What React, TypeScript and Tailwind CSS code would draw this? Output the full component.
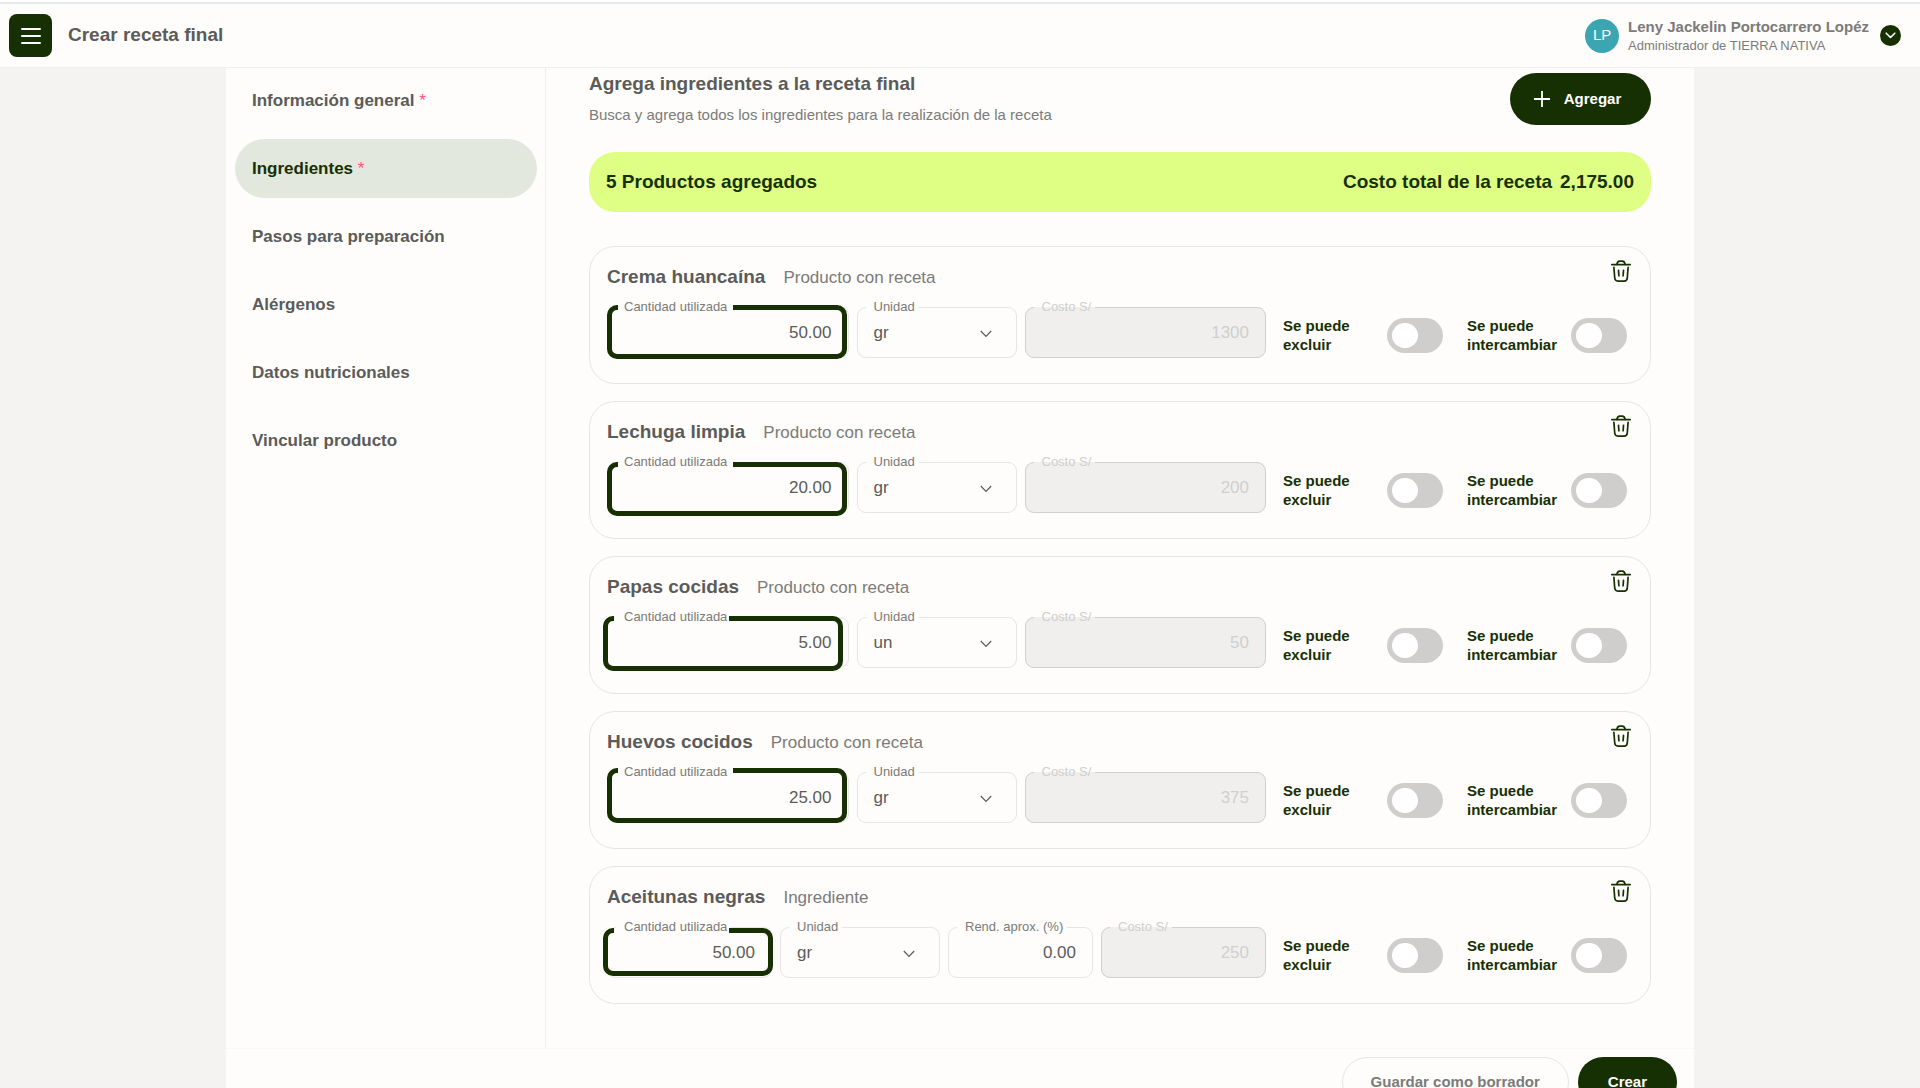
import React, { useState } from "react";

const SIDEBAR_ITEMS = [
  { label: "Información general", required: true },
  { label: "Ingredientes", required: true },
  { label: "Pasos para preparación", required: false },
  { label: "Alérgenos", required: false },
  { label: "Datos nutricionales", required: false },
  { label: "Vincular producto", required: false },
];

type Ingredient = {
  id: string;
  name: string;
  kind: string;
  quantity: string;
  unit: string;
  performance?: string;
  cost: string;
  outline: string;
};

const INGREDIENTS: Ingredient[] = [
  {
    id: "crema",
    name: "Crema huancaína",
    kind: "Producto con receta",
    quantity: "50.00",
    unit: "gr",
    cost: "1300",
    outline: "left-0 right-[2px] top-[5px] -bottom-px",
  },
  {
    id: "lechuga",
    name: "Lechuga limpia",
    kind: "Producto con receta",
    quantity: "20.00",
    unit: "gr",
    cost: "200",
    outline: "left-0 right-[2px] top-[7px] -bottom-[3px]",
  },
  {
    id: "papas",
    name: "Papas cocidas",
    kind: "Producto con receta",
    quantity: "5.00",
    unit: "un",
    cost: "50",
    outline: "-left-1 right-[6px] top-[6px] -bottom-[3px]",
  },
  {
    id: "huevos",
    name: "Huevos cocidos",
    kind: "Producto con receta",
    quantity: "25.00",
    unit: "gr",
    cost: "375",
    outline: "left-0 right-[2px] top-[3px] bottom-0",
  },
  {
    id: "aceitunas",
    name: "Aceitunas negras",
    kind: "Ingrediente",
    quantity: "50.00",
    unit: "gr",
    performance: "0.00",
    cost: "250",
    outline: "-left-1 -right-px top-[8px] bottom-[2px]",
  },
];

function TrashIcon() {
  return (
    <svg
      className="h-6 w-6"
      viewBox="0 0 24 24"
      fill="none"
      stroke="currentColor"
      strokeWidth="1.7"
      strokeLinecap="round"
      strokeLinejoin="round"
    >
      <path d="M2.8 5.6h18.4" />
      <path d="M7.9 5.4c.3-2.2 1.1-3.3 2.9-3.3h2.4c1.8 0 2.6 1.1 2.9 3.3" />
      <path d="M4.9 8.4l.8 10.4c.2 2.2 1 3.3 3.2 3.3h6.2c2.2 0 3-1.1 3.2-3.3l.8-10.4" />
      <path d="M9.500 11.400l.4 5.400" />
      <path d="M14.500 11.400l-.4 5.400" />
    </svg>
  );
}

type FieldProps = {
  id: string;
  label: string;
  className: string;
  disabled?: boolean;
  outline?: string;
  children: React.ReactNode;
};

function Field({ id, label, className, disabled, outline, children }: FieldProps) {
  return (
    <div className={`relative ${className}`}>
      <fieldset
        className={`min-w-0 rounded-[9px] border ${
          disabled
            ? "border-[#d0d0ce] bg-[#f0efee] text-[#cfcfcd]"
            : "border-[#e6e5e3] text-[#5b5b59]"
        }`}
      >
        <legend className="relative z-10 ml-2 pl-2 pr-1 text-[13px] leading-[14px]">
          <label htmlFor={id} className={disabled ? "" : "text-[#7b7b79]"}>
            {label}
          </label>
        </legend>
        {children}
      </fieldset>
      {outline && (
        <div
          className={`pointer-events-none absolute rounded-[10px] border-[5px] border-[#173003] ${outline}`}
        >
          {/* notch for the label */}
          <span className="absolute -top-[5px] left-[6px] h-[5px] w-[115px] bg-[#fefdfb]" />
        </div>
      )}
    </div>
  );
}

const inputStyles =
  "block h-[43px] w-full bg-transparent px-4 pb-[5px] text-right text-[17px] outline-none";

function Toggle({ id, label }: { id: string; label: string }) {
  return (
    <div className="flex w-[160px] shrink-0 items-center justify-between">
      <label htmlFor={id} className="w-min text-[15px] font-bold leading-[19px] text-[#173003]">
        <span className="whitespace-nowrap">Se puede</span> {label}
      </label>
      <input
        id={id}
        type="checkbox"
        role="switch"
        className="h-[35px] w-[56px] shrink-0 cursor-pointer appearance-none rounded-full bg-[#cfcecd] before:ml-[5px] before:mt-[5px] before:block before:h-[25px] before:w-[26px] before:rounded-full before:bg-white checked:bg-[#173003] checked:before:ml-[25px]"
      />
    </div>
  );
}

function IngredientCard({ item }: { item: Ingredient }) {
  const hasPerformance = item.performance !== undefined;

  return (
    <article className="h-[138px] rounded-[26px] border border-[#e6e5e3] pl-[17px] pr-[23px]">
      <div className="flex items-start justify-between">
        <div className="flex items-baseline gap-[18px] pt-[18px] leading-6">
          <h3 className="text-[19px] font-bold text-[#5b5b59]">{item.name}</h3>
          <p className="text-[17px] text-[#7b7b79]">{item.kind}</p>
        </div>
        <button
          type="button"
          aria-label={`Eliminar ${item.name}`}
          className="-mr-[6px] mt-3 text-[#173003]"
        >
          <TrashIcon />
        </button>
      </div>

      <div className="mt-[10px] flex">
        <div className="flex min-w-0 flex-1 gap-2">
          <Field
            id={`${item.id}-cantidad`}
            label="Cantidad utilizada"
            className={hasPerformance ? "w-[165px]" : "min-w-0 flex-1"}
            outline={item.outline}
          >
            <input
              id={`${item.id}-cantidad`}
              defaultValue={item.quantity}
              className={inputStyles}
            />
          </Field>

          <Field id={`${item.id}-unidad`} label="Unidad" className="w-[160px]">
            <div className="relative">
              <select
                id={`${item.id}-unidad`}
                defaultValue={item.unit}
                className="block h-[43px] w-full appearance-none bg-transparent px-4 pb-[5px] text-[17px] outline-none"
              >
                <option value={item.unit}>{item.unit}</option>
              </select>
              <svg
                className="pointer-events-none absolute right-6 top-4 h-2 w-3"
                viewBox="0 0 12 8"
                fill="none"
                stroke="currentColor"
                strokeWidth="1.2"
              >
                <path d="M.8 1l5.2 5.4L11.200 1" />
              </svg>
            </div>
          </Field>

          {hasPerformance && (
            <Field
              id={`${item.id}-rendimiento`}
              label="Rend. aprox. (%)"
              className="w-[145px]"
            >
              <input
                id={`${item.id}-rendimiento`}
                defaultValue={item.performance}
                className={inputStyles}
              />
            </Field>
          )}

          <Field
            id={`${item.id}-costo`}
            label="Costo S/"
            className="min-w-0 flex-1"
            disabled
          >
            <input
              id={`${item.id}-costo`}
              defaultValue={item.cost}
              disabled
              className={inputStyles}
            />
          </Field>
        </div>

        <div className="flex items-center gap-6 pl-[17px] pt-3">
          <Toggle id={`${item.id}-excluir`} label="excluir" />
          <Toggle id={`${item.id}-intercambiar`} label="intercambiar" />
        </div>
      </div>
    </article>
  );
}

function Header() {
  return (
    <header className="flex h-16 shrink-0 items-center justify-between border-b border-[#f0efee] bg-[#fefdfb] pl-[9px] pr-[19px]">
      <div className="flex items-center gap-4">
        <button
          type="button"
          aria-label="Menú"
          className="flex h-[43px] w-[43px] items-center justify-center rounded-lg bg-[#173003] text-white"
        >
          <svg
            className="h-[18px] w-5"
            viewBox="0 0 20 18"
            stroke="currentColor"
            strokeWidth="2"
            strokeLinecap="round"
          >
            <path d="M1 2h18M1 9h18M1 16h18" />
          </svg>
        </button>
        <h1 className="text-[19px] font-bold text-[#5b5b59]">Crear receta final</h1>
      </div>

      <div className="flex items-center">
        <span className="flex h-[34px] w-[34px] items-center justify-center rounded-full bg-[#3ba6b2] text-[15px] text-white">
          LP
        </span>
        <div className="ml-[9px] text-[#7b7b79]">
          <p className="text-[15px] font-bold leading-5">Leny Jackelin Portocarrero Lopéz</p>
          <p className="text-[13px] leading-[18px]">Administrador de TIERRA NATIVA</p>
        </div>
        <button
          type="button"
          aria-label="Cuenta"
          className="ml-[11px] flex h-[21px] w-[21px] items-center justify-center rounded-full bg-[#173003] text-white"
        >
          <svg
            className="h-[7px] w-[11px]"
            viewBox="0 0 11 7"
            fill="none"
            stroke="currentColor"
            strokeWidth="1.6"
            strokeLinecap="round"
            strokeLinejoin="round"
          >
            <path d="M1.200 1.200l4.300 4.300 4.300-4.300" />
          </svg>
        </button>
      </div>
    </header>
  );
}

function Sidebar() {
  const [active, setActive] = useState("Ingredientes");

  return (
    <nav className="flex w-[320px] shrink-0 flex-col gap-[9px] border-r border-[#f0efee] pl-[9px] pr-2 pt-[3px]">
      {SIDEBAR_ITEMS.map((item) => (
        <button
          key={item.label}
          type="button"
          onClick={() => setActive(item.label)}
          className={`h-[59px] rounded-full px-[17px] text-left text-[17px] font-bold ${
            active === item.label ? "bg-[#e2e8de] text-[#173003]" : "text-[#5b5b59]"
          }`}
        >
          {item.label}
          {item.required && <span className="font-normal text-[#ff4d80]"> *</span>}
        </button>
      ))}
    </nav>
  );
}

function App() {
  return (
    <div className="flex h-screen flex-col overflow-hidden border-t-2 border-white bg-[#f4f3f2] font-['Liberation_Sans',Arial,sans-serif]">
      <div className="h-0.5 shrink-0 bg-[#e2e8ec]" />
      <Header />

      <div className="mx-auto flex w-full max-w-[1468px] flex-1 flex-col bg-[#fefdfb]">
        <div className="flex">
          <Sidebar />

          <main className="min-w-0 flex-1 pb-[44px] pl-[43px] pr-[43px]">
            <div className="flex items-start justify-between pt-[5px]">
              <div>
                <h2 className="text-[19px] font-bold leading-[22px] text-[#5b5b59]">
                  Agrega ingredientes a la receta final
                </h2>
                <p className="mt-[10px] text-[15px] leading-5 text-[#7b7b79]">
                  Busca y agrega todos los ingredientes para la realización de la receta
                </p>
              </div>
              <button
                type="button"
                className="flex h-[52px] w-[141px] items-center justify-center gap-[14px] rounded-full bg-[#173003] pr-1.5 text-[15px] font-bold text-white"
              >
                <svg
                  className="h-4 w-4"
                  viewBox="0 0 16 16"
                  stroke="currentColor"
                  strokeWidth="1.8"
                >
                  <path d="M8 0v16M0 8h16" />
                </svg>
                Agregar
              </button>
            </div>

            <div className="mt-[27px] flex h-[60px] items-center justify-between rounded-[26px] bg-[#deff84] px-[17px] text-[19px] font-bold text-[#173003]">
              <p>5 Productos agregados</p>
              <p className="flex gap-2">
                <span>Costo total de la receta</span>
                <span>2,175.00</span>
              </p>
            </div>

            <div className="mt-[34px] flex flex-col gap-[17px]">
              {INGREDIENTS.map((item) => (
                <IngredientCard key={item.id} item={item} />
              ))}
            </div>
          </main>
        </div>

        <footer className="flex justify-end gap-[9px] border-t border-[#f9f8f6] pr-[17px] pt-2 text-[15px] font-bold leading-4">
          <button
            type="button"
            className="h-[50px] rounded-full border border-[#e6e5e3] px-7 text-[#7b7b79]"
          >
            Guardar como borrador
          </button>
          <button type="button" className="h-[50px] rounded-full bg-[#173003] px-[30px] text-white">
            Crear
          </button>
        </footer>
      </div>
    </div>
  );
}

export default App;
